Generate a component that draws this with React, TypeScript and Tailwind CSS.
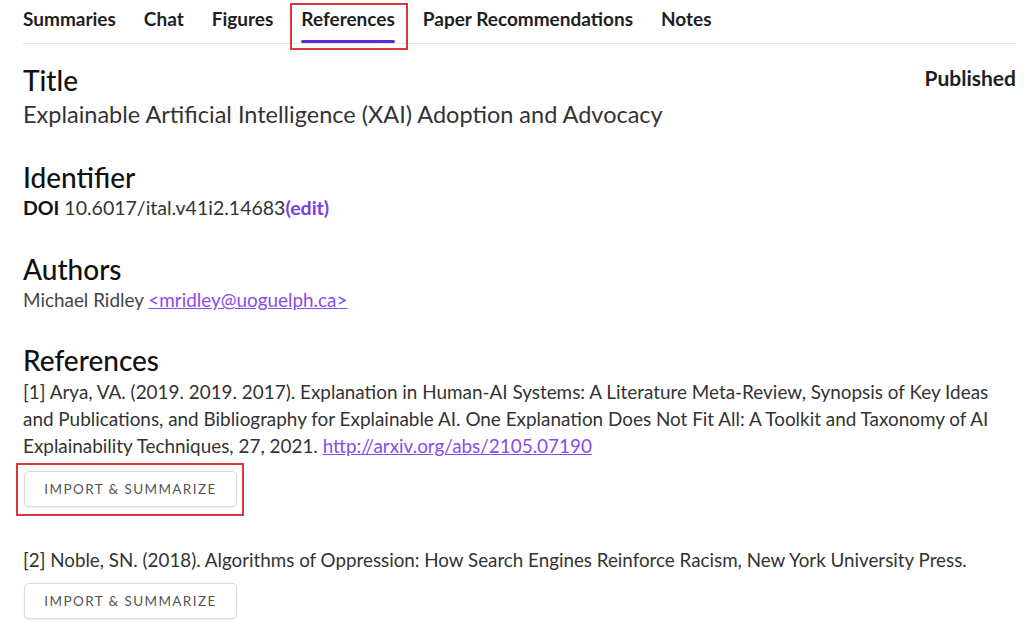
import React from "react";

const tabs = ["Summaries", "Chat", "Figures", "References", "Paper Recommendations", "Notes"];

function ImportButton() {
  return (
    <button className="h-[36px] w-[213px] rounded-[5px] border border-[#d9d9d9] bg-white text-[13.5px] tracking-[1.4px] text-[#555] shadow-[0_1px_2px_rgba(0,0,0,0.08)]">
      IMPORT &amp; SUMMARIZE
    </button>
  );
}

export default function App() {
  return (
    <div className="h-[624px] w-[1024px] overflow-hidden bg-white font-['Lato',sans-serif] text-[#222]">
      <nav className="ml-[23px] mr-[8px] flex gap-[28px] border-b border-[#e3e3e3] pt-[7px]">
        {tabs.map((t) => (
          <div key={t} className="relative">
            <div className="text-[19px] font-bold leading-[23px] text-[#1f1f1f]">{t}</div>
            <div className={`mt-[10px] h-[3px] rounded ${t === "References" ? "bg-[#5b2bd9]" : "bg-transparent"}`} />
            {t === "References" && (
              <div className="absolute left-[-11px] top-[-4px] h-[47px] w-[118px] border-2 border-[#d9363e]" />
            )}
          </div>
        ))}
      </nav>

      <main className="pl-[23px] pr-[8px]">
        <section className="mt-[19px] flex items-start justify-between">
          <div>
            <h2 className="text-[28px] font-medium leading-[34px] text-[#111]">Title</h2>
            <p className="mt-[2px] text-[23.5px] leading-[30px] text-[#333]">
              Explainable Artificial Intelligence (XAI) Adoption and Advocacy
            </p>
          </div>
          <div className="pt-[1px] text-[21px] font-bold leading-[28px] text-[#1f1f1f]">Published</div>
        </section>

        <section className="mt-[31px]">
          <h2 className="text-[28px] font-medium leading-[34px] text-[#111]">Identifier</h2>
          <p className="mt-[1px] text-[19.5px] leading-[26px] text-[#333]">
            <span className="font-bold text-[#111]">DOI</span> 10.6017/ital.v41i2.14683
            <span className="font-bold text-[#7a3ee0]">(edit)</span>
          </p>
        </section>

        <section className="mt-[31px]">
          <h2 className="text-[28px] font-medium leading-[34px] text-[#111]">Authors</h2>
          <p className="mt-[1px] text-[18.9px] leading-[26px] text-[#444]">
            Michael Ridley{" "}
            <a className="text-[#8b4be8] underline" href="#">
              &lt;mridley@uoguelph.ca&gt;
            </a>
          </p>
        </section>

        <section className="mt-[30px]">
          <h2 className="text-[28px] font-medium leading-[34px] text-[#111]">References</h2>
          <p className="mt-[1px] whitespace-nowrap text-[18.9px] leading-[27px] text-[#333]">
            [1] Arya, VA. (2019. 2019. 2017). Explanation in Human-AI Systems: A Literature Meta-Review, Synopsis of Key Ideas
            <br />
            and Publications, and Bibliography for Explainable AI. One Explanation Does Not Fit All: A Toolkit and Taxonomy of AI
            <br />
            Explainability Techniques, 27, 2021.{" "}
            <a className="text-[#8b4be8] underline" href="#">
              http://arxiv.org/abs/2105.07190
            </a>
          </p>
        </section>
      </main>

      <div className="ml-[16px] mt-[4px] w-[228px] border-2 border-[#d9363e] pl-[6px] pt-[6px] pb-[7px]">
        <ImportButton />
      </div>

      <p className="mt-[30px] px-[23px] whitespace-nowrap text-[18.8px] leading-[27px] text-[#333]">
        [2] Noble, SN. (2018). Algorithms of Oppression: How Search Engines Reinforce Racism, New York University Press.
      </p>
      <div className="mt-[10px] pl-[24px]">
        <ImportButton />
      </div>
    </div>
  );
}
